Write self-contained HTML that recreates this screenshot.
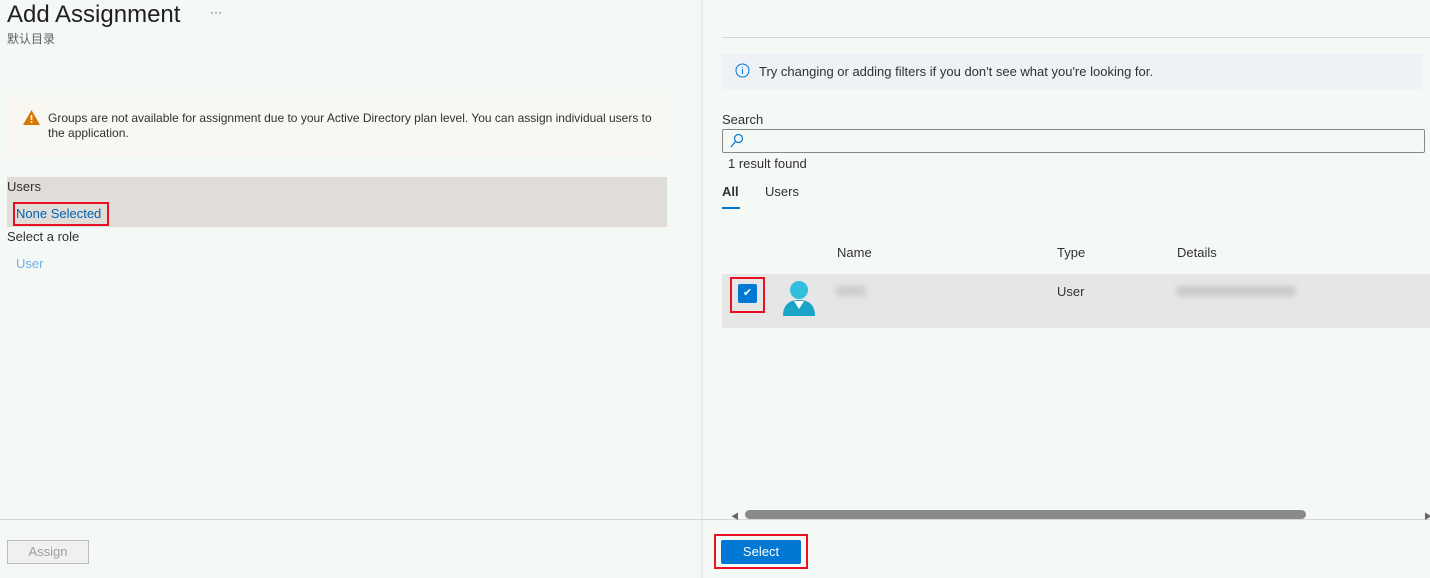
<!DOCTYPE html>
<html><head><meta charset="utf-8"><style>
*{margin:0;padding:0;box-sizing:border-box}
body{width:1430px;height:578px;background:#f5f9f6;font-family:"Liberation Sans","Noto Sans CJK SC",sans-serif;font-size:13px;color:#323130;position:relative;overflow:hidden}
.a{position:absolute;white-space:nowrap}
</style></head><body>
<div class="a" style="left:7px;top:0;font-size:24px;color:#201f1e;line-height:30px">Add Assignment</div>
<div class="a" style="left:210px;top:5px;font-size:12px;color:#605e5c">···</div>
<div class="a" style="left:7px;top:30px;font-size:12px;color:#605e5c">默认目录</div>
<div class="a" style="left:7px;top:95px;width:660px;height:62px;background:#f9f7f1"></div>
<svg class="a" style="left:23px;top:110px" width="17" height="15" viewBox="0 0 17 15"><path d="M8.5 0L17 15H0Z" fill="#d97706"/><rect x="7.7" y="5" width="1.6" height="5" fill="#fff"/><rect x="7.7" y="11" width="1.6" height="1.6" fill="#fff"/></svg>
<div class="a" style="left:48px;top:111px;font-size:12px;line-height:15px;color:#323130;white-space:normal;width:610px">Groups are not available for assignment due to your Active Directory plan level. You can assign individual users to the application.</div>
<div class="a" style="left:7px;top:177px;width:660px;height:50px;background:#e0ddd8"></div>
<div class="a" style="left:7px;top:179px">Users</div>
<div class="a" style="left:13px;top:202px;width:96px;height:24px;border:2px solid #e81123"></div>
<div class="a" style="left:16px;top:206px;color:#0063b1">None Selected</div>
<div class="a" style="left:7px;top:229px">Select a role</div>
<div class="a" style="left:16px;top:256px;color:#71afe5">User</div>
<div class="a" style="left:701px;top:0;width:2px;height:578px;background:#e8ebe9"></div>
<div class="a" style="left:0;top:519px;width:1430px;height:1px;background:#d6d8d6"></div>
<div class="a" style="left:7px;top:540px;width:82px;height:24px;border:1px solid #bdbdbd;background:#f0f0f0;color:#a19f9d;text-align:center;line-height:22px">Assign</div>
<div class="a" style="left:722px;top:37px;width:708px;height:1px;background:#d6d8d6"></div>
<div class="a" style="left:722px;top:54px;width:701px;height:35px;background:#eef1f6"></div>
<svg class="a" style="left:735px;top:63px" width="15" height="15" viewBox="0 0 15 15"><circle cx="7.5" cy="7.5" r="6.5" fill="none" stroke="#0078d4" stroke-width="1"/><rect x="7" y="6" width="1" height="5" fill="#0078d4"/><rect x="7" y="3.8" width="1" height="1" fill="#0078d4"/></svg>
<div class="a" style="left:759px;top:64px;color:#323130">Try changing or adding filters if you don't see what you're looking for.</div>
<div class="a" style="left:722px;top:112px">Search</div>
<div class="a" style="left:722px;top:129px;width:703px;height:24px;border:1px solid #8a8886;border-radius:2px"></div>
<svg class="a" style="left:729px;top:133px" width="16" height="16" viewBox="0 0 16 16"><circle cx="9.5" cy="5.5" r="4" fill="none" stroke="#0078d4" stroke-width="1.2"/><path d="M6.5 8.5L2 14" stroke="#0078d4" stroke-width="1.2"/></svg>
<div class="a" style="left:728px;top:156px">1 result found</div>
<div class="a" style="left:722px;top:184px;font-weight:bold;color:#323130">All</div>
<div class="a" style="left:722px;top:207px;width:18px;height:2px;background:#0078d4"></div>
<div class="a" style="left:765px;top:184px">Users</div>
<div class="a" style="left:837px;top:245px">Name</div>
<div class="a" style="left:1057px;top:245px">Type</div>
<div class="a" style="left:1177px;top:245px">Details</div>
<div class="a" style="left:722px;top:274px;width:708px;height:54px;background:#e6e6e6"></div>
<div class="a" style="left:730px;top:277px;width:35px;height:36px;border:2px solid #e81123"></div>
<div class="a" style="left:738px;top:284px;width:19px;height:19px;background:#0078d4;border-radius:2px;color:#fff;font-size:11px;text-align:center;line-height:19px">✔</div>
<svg class="a" style="left:782px;top:280px" width="34" height="37" viewBox="0 0 34 37"><circle cx="17" cy="10" r="9" fill="#32bedd"/><path d="M1 36C1 25 7 20 17 20C27 20 33 25 33 36Z" fill="#1ca3c8"/><path d="M12 21L17 29L22 21Z" fill="#fff"/></svg>
<div class="a" style="left:836px;top:286px;width:30px;height:10px;background:#ccc;filter:blur(3px)"></div>
<div class="a" style="left:1057px;top:284px">User</div>
<div class="a" style="left:1177px;top:286px;width:118px;height:10px;background:#c8c8c8;filter:blur(3px)"></div>
<div class="a" style="left:731px;top:511px;font-size:8px;color:#666">◀</div>
<div class="a" style="left:745px;top:510px;width:561px;height:9px;background:#8a8a8a;border-radius:5px"></div>
<div class="a" style="left:1424px;top:511px;font-size:8px;color:#666">▶</div>
<div class="a" style="left:714px;top:534px;width:94px;height:35px;border:2px solid #e81123"></div>
<div class="a" style="left:721px;top:540px;width:80px;height:24px;background:#0078d4;border-radius:2px;color:#fff;text-align:center;line-height:24px">Select</div>
</body></html>
